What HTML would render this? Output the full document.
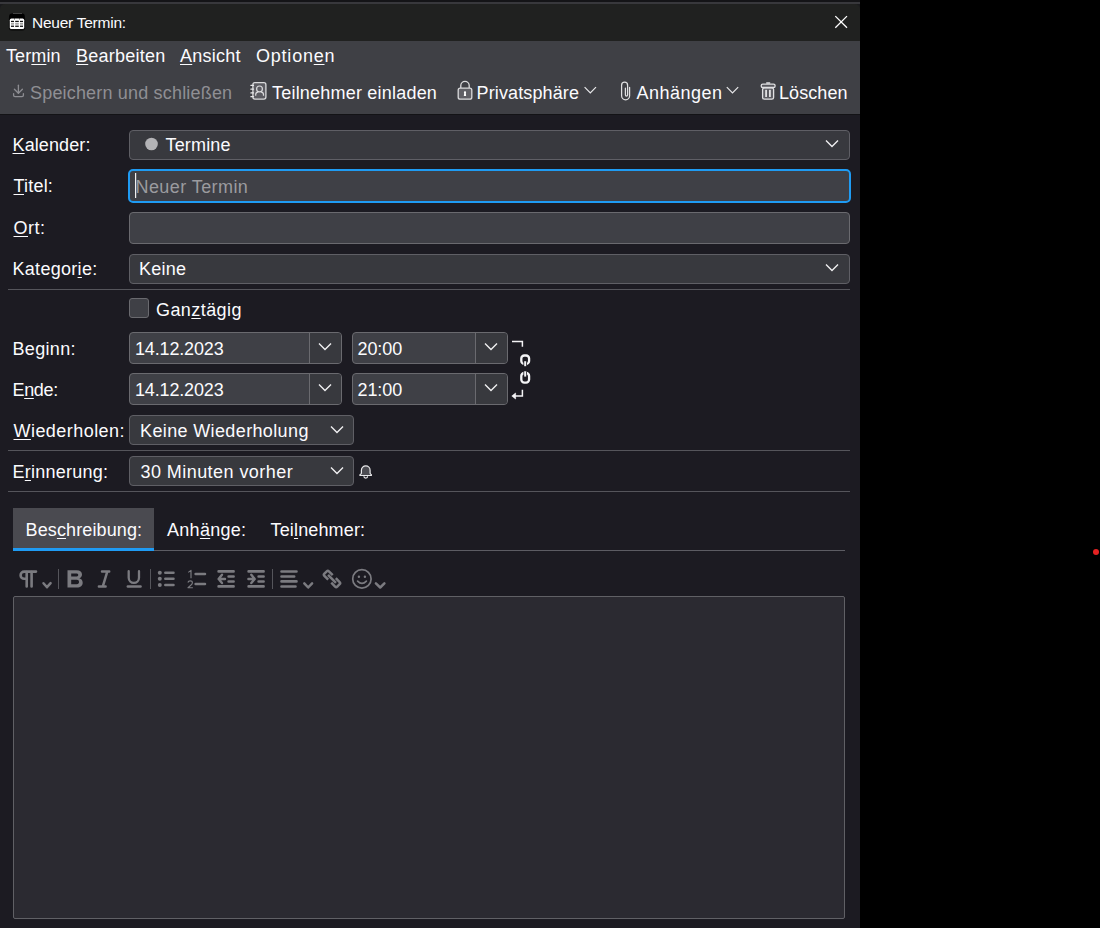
<!DOCTYPE html>
<html><head><meta charset="utf-8">
<style>
*{box-sizing:border-box;margin:0;padding:0}
html,body{width:1100px;height:928px;overflow:hidden;background:#000;font-family:"Liberation Sans",sans-serif;color:#fbfbfe}
.a{position:absolute}
.t{position:absolute;font-size:18px;line-height:20px;white-space:nowrap;color:#fbfbfe}
.u{text-decoration:underline;text-underline-offset:2px;text-decoration-thickness:1px}
#win{position:absolute;left:0;top:0;width:860px;height:928px;background:#1c1b22;overflow:hidden}
.fld{position:absolute;background:#3f4046;border:1px solid #6a6a6f;border-radius:4px}
.sel{background:#38393e;border-color:#5f5f65}
.sep{position:absolute;height:1px;background:#55555b}
svg{position:absolute;overflow:visible}
</style></head><body>
<div id="win">
  <!-- top strips -->
  <div class="a" style="left:0;top:0;width:860px;height:2px;background:#141417"></div>
  <div class="a" style="left:0;top:2px;width:860px;height:2px;background:#38383c"></div>
  <!-- titlebar -->
  <div class="a" style="left:0;top:4px;width:860px;height:10px;background:#1a1a1d"></div>
  <div class="a" style="left:0;top:4px;width:860px;height:37px;background:#202120;border-radius:5px 5px 0 0"></div>
  <div class="t" style="left:32.0px;top:13.5px;font-size:15.5px;line-height:17px;letter-spacing:-0.25px">Neuer Termin:</div>
  <!-- menubar + toolbar -->
  <div class="a" style="left:0;top:41px;width:860px;height:73px;background:#3f4045"></div>
  <div class="a" style="left:0;top:114px;width:860px;height:1px;background:#131316"></div>
  <div class="t" style="left:6.0px;top:46px;letter-spacing:0.10px">Ter<span class="u">m</span>in</div>
  <div class="t" style="left:76.0px;top:46px;letter-spacing:0.23px"><span class="u">B</span>earbeiten</div>
  <div class="t" style="left:180.0px;top:46px;letter-spacing:0.25px"><span class="u">A</span>nsicht</div>
  <div class="t" style="left:256.0px;top:46px;letter-spacing:0.78px">Option<span class="u">e</span>n</div>

  <div class="t" style="left:30.0px;top:83px;color:#8f8f94;letter-spacing:0.18px">Speichern und schließen</div>
  <div class="t" style="left:272.0px;top:83px;letter-spacing:0.21px">Teilnehmer einladen</div>
  <div class="t" style="left:476.5px;top:83px;letter-spacing:0.13px">Privatsphäre</div>
  <div class="t" style="left:636.5px;top:83px;letter-spacing:0.49px">Anhängen</div>
  <div class="t" style="left:779.0px;top:83px;letter-spacing:0.08px">Löschen</div>

  <!-- form labels -->
  <div class="t" style="left:12.5px;top:135px;letter-spacing:0.11px"><span class="u">K</span>alender:</div>
  <div class="t" style="left:13.5px;top:176px;letter-spacing:0.20px"><span class="u">T</span>itel:</div>
  <div class="t" style="left:13.5px;top:218px;letter-spacing:0.50px"><span class="u">O</span>rt:</div>
  <div class="t" style="left:12.5px;top:259px;letter-spacing:0.29px">Kategor<span class="u">i</span>e:</div>
  <div class="t" style="left:12.5px;top:339px;letter-spacing:0.33px">Beginn:</div>
  <div class="t" style="left:12.5px;top:380px;letter-spacing:-0.35px">E<span class="u">n</span>de:</div>
  <div class="t" style="left:13.5px;top:421px;letter-spacing:0.45px"><span class="u">W</span>iederholen:</div>
  <div class="t" style="left:12.5px;top:462px;letter-spacing:0.25px">E<span class="u">r</span>innerung:</div>

  <!-- fields -->
  <div class="fld sel" style="left:129px;top:130px;width:721px;height:30px"></div>
  <div class="t" style="left:165.5px;top:135px;letter-spacing:0.17px">Termine</div>
  <div class="fld" style="left:128px;top:169px;width:723px;height:34px;border:2px solid #1f9bf3;border-radius:5px"></div>
  <div class="t" style="left:135.5px;top:177px;color:#9b9b9f;letter-spacing:0.42px">Neuer Termin</div>
  <div class="fld" style="left:129px;top:212px;width:721px;height:32px"></div>
  <div class="fld sel" style="left:129px;top:254px;width:721px;height:30px"></div>
  <div class="t" style="left:139.0px;top:259px;letter-spacing:0.25px">Keine</div>

  <div class="sep" style="left:8px;top:289px;width:842px"></div>
  <div class="fld" style="left:129px;top:298px;width:20px;height:20px;border-radius:3px"></div>
  <div class="t" style="left:156.0px;top:300px;letter-spacing:0.43px">Gan<span class="u">z</span>tägig</div>

  <div class="fld" style="left:129px;top:332px;width:213px;height:32px"></div>
  <div class="t" style="left:135.0px;top:339px;letter-spacing:-0.16px">14.12.2023</div>
  <div class="fld" style="left:352px;top:332px;width:156px;height:32px"></div>
  <div class="t" style="left:357.5px;top:339px;letter-spacing:-0.10px">20:00</div>
  <div class="fld" style="left:129px;top:373px;width:213px;height:32px"></div>
  <div class="t" style="left:135.0px;top:380px;letter-spacing:-0.16px">14.12.2023</div>
  <div class="fld" style="left:352px;top:373px;width:156px;height:32px"></div>
  <div class="t" style="left:357.5px;top:380px;letter-spacing:-0.10px">21:00</div>


  <div class="a" style="left:309px;top:333px;width:32px;height:30px;background:#38393e;border-left:1px solid #6a6a6f;border-radius:0 3px 3px 0"></div>
  <div class="a" style="left:475px;top:333px;width:32px;height:30px;background:#38393e;border-left:1px solid #6a6a6f;border-radius:0 3px 3px 0"></div>
  <div class="a" style="left:309px;top:374px;width:32px;height:30px;background:#38393e;border-left:1px solid #6a6a6f;border-radius:0 3px 3px 0"></div>
  <div class="a" style="left:475px;top:374px;width:32px;height:30px;background:#38393e;border-left:1px solid #6a6a6f;border-radius:0 3px 3px 0"></div>
  <div class="fld sel" style="left:129px;top:415px;width:225px;height:30px"></div>
  <div class="t" style="left:140.0px;top:421px;letter-spacing:0.37px">Keine Wiederholung</div>
  <div class="sep" style="left:8px;top:450px;width:842px"></div>
  <div class="fld sel" style="left:129px;top:456px;width:225px;height:30px"></div>
  <div class="t" style="left:140.5px;top:462px;letter-spacing:0.44px">30 Minuten vorher</div>
  <div class="sep" style="left:8px;top:491px;width:842px"></div>

  <!-- tabs -->
  <div class="a" style="left:13px;top:508px;width:141px;height:43px;background:#4a4a50"></div>
  <div class="a" style="left:13px;top:548px;width:141px;height:3px;background:#1f9bf3"></div>
  <div class="a" style="left:154px;top:550px;width:691px;height:1px;background:#5c5c63"></div>
  <div class="t" style="left:25.5px;top:520px;letter-spacing:0.12px">Bes<span class="u">c</span>hreibung:</div>
  <div class="t" style="left:167.0px;top:520px;letter-spacing:0.29px">Anh<span class="u">ä</span>nge:</div>
  <div class="t" style="left:270.5px;top:520px;letter-spacing:0.15px">Tei<span class="u">l</span>nehmer:</div>

  <!-- textarea -->
  <div class="a" style="left:13px;top:596px;width:832px;height:323px;background:#2b2a31;border:1px solid #606065;border-radius:2px"></div>

  <!-- ICONS -->
  <svg width="1100" height="928" style="left:0;top:0" viewBox="0 0 1100 928">
    <!-- title calendar icon -->
    <rect x="8.8" y="16" width="16.4" height="14.8" rx="3.2" fill="#000" opacity="0.55"/>
    <rect x="9.2" y="13.6" width="15.6" height="6.6" rx="2.6" fill="#000"/>
    <rect x="13" y="13" width="9" height="0.7" fill="#5a5a5a"/>
    <rect x="9.8" y="18.6" width="14.4" height="10.4" rx="1.6" fill="#fff"/>
    <path d="M13.9 18.4 L14.4 19.9 L14.9 18.4 Z M18.9 18.4 L19.4 19.9 L19.9 18.4 Z" fill="#000"/>
    <g fill="#111">
      <rect x="11" y="20.8" width="3" height="1.3"/><rect x="15.2" y="20.8" width="3.6" height="1.3"/><rect x="20" y="20.8" width="3" height="1.3"/>
      <rect x="11" y="25.6" width="3" height="1.3"/><rect x="15.2" y="25.6" width="3.6" height="1.3"/><rect x="20" y="25.6" width="3" height="1.3"/>
    </g>
    <g fill="#999">
      <rect x="11" y="23.1" width="3" height="1.5"/><rect x="15.2" y="23.1" width="3.6" height="1.5"/><rect x="20" y="23.1" width="3" height="1.5"/>
    </g>
    <!-- close X -->
    <path d="M835.3 16.1 L847 27.8 M847 16.1 L835.3 27.8" stroke="#fff" stroke-width="1.3" fill="none"/>
    <!-- download -->
    <g stroke="#8d8d92" stroke-width="1.3" fill="none" stroke-linecap="round" stroke-linejoin="round">
      <path d="M18.4 85.2 V93"/><path d="M14.4 89.2 L18.4 93.2 L22.4 89.2"/>
      <path d="M13.6 93.6 V95.2 Q13.6 96.6 15 96.6 H22 Q23.4 96.6 23.4 95.2 V93.6"/>
    </g>
    <!-- address book -->
    <rect x="252.9" y="82.7" width="13" height="16.4" rx="2" fill="#5b5b61" stroke="#dadadc" stroke-width="1.3"/>
    <g fill="#e6e6e8"><rect x="250.3" y="84.8" width="3.8" height="1.3" rx=".6"/><rect x="250.3" y="88.5" width="3.8" height="1.3" rx=".6"/><rect x="250.3" y="92.3" width="3.8" height="1.3" rx=".6"/><rect x="250.3" y="96" width="3.8" height="1.3" rx=".6"/></g>
    <g stroke="#dadadc" stroke-width="1.2" fill="none">
      <circle cx="259.5" cy="88.9" r="2.9"/>
      <path d="M255.7 95.8 V94.5 Q255.7 92.2 258.3 91.8 M263.5 95.8 V94.5 Q263.5 92.2 260.9 91.8"/>
    </g>
    <!-- lock -->
    <path d="M460.8 88 V85.6 A4.2 4.2 0 0 1 469.2 85.6 V88" stroke="#dadadc" stroke-width="1.3" fill="none"/>
    <rect x="458.2" y="88.2" width="13.6" height="11" rx="2" fill="#606066" stroke="#dadadc" stroke-width="1.3"/>
    <circle cx="465" cy="92.3" r="1.15" fill="#fff"/><path d="M464.2 93 h1.6 l0.35 2.9 h-2.3 z" fill="#fff"/>
    <!-- paperclip -->
    <path d="M629.6 87.4 V95.8 A4 4 0 0 1 621.6 95.8 V85.2 A3 3 0 0 1 627.6 85.2 V95 A1.1 1.1 0 0 1 625.4 95 V88" stroke="#e0e0e2" stroke-width="1.25" fill="none" stroke-linecap="round"/>
    <!-- trash -->
    <rect x="762.6" y="87.8" width="11" height="11.4" rx="1.8" fill="#5b5b61" stroke="#e0e0e2" stroke-width="1.3"/>
    <rect x="761.2" y="84.2" width="13.9" height="3.3" rx="1.6" fill="#58585e" stroke="#e0e0e2" stroke-width="1.3"/>
    <rect x="766" y="82.2" width="4.4" height="1.6" rx=".8" fill="#e0e0e2"/>
    <rect x="765.2" y="89.8" width="1.8" height="7.2" fill="#e0e0e2"/><rect x="769" y="89.8" width="1.8" height="7.2" fill="#e0e0e2"/>
    <!-- toolbar chevrons -->
    <path d="M584.6 87.2 L590.3 92.9 L596 87.2" stroke="#e8e8ea" stroke-width="1.2" fill="none"/>
    <path d="M726.8 87.2 L732.5 92.9 L738.2 87.2" stroke="#e8e8ea" stroke-width="1.2" fill="none"/>
    <!-- kalender dot -->
    <circle cx="151.5" cy="144" r="6.3" fill="#b3b3b6"/>
    <!-- select chevrons -->
    <g stroke="#f0f0f2" stroke-width="1.35" fill="none">
      <path d="M826 140.6 L832 146.6 L838 140.6"/>
      <path d="M826 264.6 L832 270.6 L838 264.6"/>
      <path d="M319 343.6 L325 349.6 L331 343.6"/>
      <path d="M485 343.6 L491 349.6 L497 343.6"/>
      <path d="M319 384.6 L325 390.6 L331 384.6"/>
      <path d="M485 384.6 L491 390.6 L497 384.6"/>
      <path d="M331 426.6 L337 432.6 L343 426.6"/>
      <path d="M331 467.6 L337 473.6 L343 467.6"/>
    </g>
    <!-- link icon -->
    <g stroke="#f4f4f6" fill="none">
      <path d="M512 341.6 H522.4 V346.8" stroke-width="1.5"/>
      <path d="M522.4 389.8 V396 H514" stroke-width="1.5"/>
      <path d="M511.8 396 L515.6 393 V399 Z" fill="#f4f4f6" stroke-width="0.6"/>
      <rect x="521.3" y="355.5" width="7.8" height="8.4" rx="3" stroke-width="2.3"/>
      <rect x="523.4" y="362" width="3.6" height="3.5" fill="#1c1b22" stroke="none"/>
      <path d="M525.2 361.2 V366.2" stroke-width="2"/>
      <rect x="521.3" y="373" width="7.8" height="9.6" rx="3" stroke-width="2.3"/>
      <rect x="523.4" y="371.5" width="3.6" height="3.2" fill="#1c1b22" stroke="none"/>
      <path d="M525.2 371.3 V376.6" stroke-width="2"/>
    </g>
    <!-- bell -->
    <path d="M361.4 473 V470.2 A4.35 4.35 0 0 1 370.1 470.2 V473 Q370.1 473.7 370.9 474.3 Q371.6 474.8 371.4 475.5 H359.9 Q359.7 474.8 360.5 474.3 Q361.4 473.7 361.4 473 Z" fill="#4b4b51" stroke="#e8e8ea" stroke-width="1.2" stroke-linejoin="round"/>
    <path d="M363.9 476.3 A1.85 1.85 0 0 0 367.6 476.3" stroke="#e8e8ea" stroke-width="1.2" fill="none"/>
    <!-- text cursor -->
    <rect x="135" y="173" width="1.2" height="25" fill="#f0f0f0"/>
  </svg>

  <!-- EDITOR TOOLBAR -->
  <svg width="1100" height="928" style="left:0;top:0" viewBox="0 0 1100 928">
    <g fill="#55555b">
      <rect x="58" y="569" width="1" height="20"/>
      <rect x="150" y="569" width="1" height="20"/>
      <rect x="272" y="569" width="1" height="20"/>
    </g>
    <g stroke="#7b7b80" fill="none" stroke-linecap="round" stroke-linejoin="round">
      <!-- pilcrow -->
      <path d="M36 571.6 H24.2 A3.6 3.6 0 0 0 24.2 578.8 H26.7" stroke-width="2.6"/>
      <path d="M26.7 572 V586.4 M31.6 572 V586.4" stroke-width="2.6"/>
      <!-- small chevrons -->
      <path d="M43.5 583.2 L47 587.2 L50.6 583.2" stroke-width="2.5"/>
      <path d="M304.3 583.4 L308.2 587.5 L312.1 583.4" stroke-width="2.5"/>
      <path d="M375.9 583.3 L380.2 587.5 L384.4 583.3" stroke-width="2.5"/>
      <!-- italic -->
      <path d="M102 571.6 H109.2 M98.9 586.4 H105.6 M107.3 571.6 L102.8 586.4" stroke-width="2.5"/>
      <!-- underline -->
      <path d="M128.7 571.2 V577.8 A5.15 5.15 0 0 0 139 577.8 V571.2" stroke-width="2.3"/>
      <path d="M127.8 586.5 H140.6" stroke-width="2.4"/>
      <!-- bullets -->
      <path d="M165.3 572.7 H173.5 M165.3 578.7 H173.5 M165.3 585 H173.5" stroke-width="2.5"/>
      <!-- numbered lines -->
      <path d="M195.6 574 H205 M195.6 583.9 H205" stroke-width="2.5"/>
      <!-- outdent -->
      <path d="M218.6 571.4 H233.6 M228.6 576.5 H233.6 M228.6 581.5 H233.6 M218.6 586.4 H233.6" stroke-width="2.6"/>
      <path d="M222 574.8 L218.6 579 L222 583 M218.8 579 H225" stroke-width="2.4"/>
      <!-- indent -->
      <path d="M248.6 571.4 H263.6 M258.6 576.5 H263.6 M258.6 581.5 H263.6 M248.6 586.4 H263.6" stroke-width="2.6"/>
      <path d="M251.3 574.8 L254.7 579 L251.3 583 M254.5 579 H248.4" stroke-width="2.4"/>
      <!-- align -->
      <path d="M281.5 571.5 H296.5 M281.5 576.5 H294.2 M281.5 581.4 H296.5 M281.5 586.5 H295.5" stroke-width="2.6"/>
      <!-- link -->
      <g transform="translate(332 578.9) rotate(45)" stroke-linecap="butt">
        <path d="M-2.2 -3.2 H-7.6 Q-9.1 -3.2 -9.1 -1.7 V1.7 Q-9.1 3.2 -7.6 3.2 H-2.2" stroke-width="2.5"/>
        <path d="M2.2 -3.2 H7.6 Q9.1 -3.2 9.1 -1.7 V1.7 Q9.1 3.2 7.6 3.2 H2.2" stroke-width="2.5"/>
        <path d="M-5.6 0 H5.6" stroke-width="2.5"/>
      </g>
      <!-- smiley -->
      <circle cx="361.9" cy="578.9" r="9.2" stroke-width="1.7"/>
      <path d="M357.6 581.2 Q362 585.6 366.4 581.2" stroke-width="1.7"/>
    </g>
    <g fill="#7b7b80">
      <!-- bold B -->
      <path d="M67.5 570.2 H76.6 C80.3 570.2 82 572 82 574.4 C82 576.2 81 577.6 79.4 578.2 C81.4 578.8 82.7 580.4 82.7 582.8 C82.7 585.8 80.5 587.6 77 587.6 H67.5 Z M71.2 573.6 V576.6 H76.3 C77.6 576.6 78.3 576 78.3 575.1 C78.3 574.2 77.6 573.6 76.3 573.6 Z M71.2 579.8 V584.2 H76.8 C78.3 584.2 79 583.4 79 582 C79 580.6 78.3 579.8 76.8 579.8 Z" fill-rule="evenodd"/>
      <circle cx="159.8" cy="572.7" r="2"/><circle cx="159.8" cy="578.7" r="2"/><circle cx="159.8" cy="585" r="2"/>
      <circle cx="358.9" cy="576.8" r="1.2"/><circle cx="364.9" cy="576.8" r="1.2"/>
    </g>
    <path d="M188.3 572.4 L191 570.4 V578.2 M187.9 582.5 Q188.4 580.8 190.2 580.8 Q192.4 580.8 192.4 582.7 Q192.4 584 190.8 585.3 L188 587.7 H192.9" stroke="#7b7b80" stroke-width="1.15" fill="none" stroke-linejoin="round"/>
    
  </svg>
</div>
<div class="a" style="left:1093px;top:549px;width:6.2px;height:6.2px;border-radius:50%;background:#e52222"></div>
</body></html>
